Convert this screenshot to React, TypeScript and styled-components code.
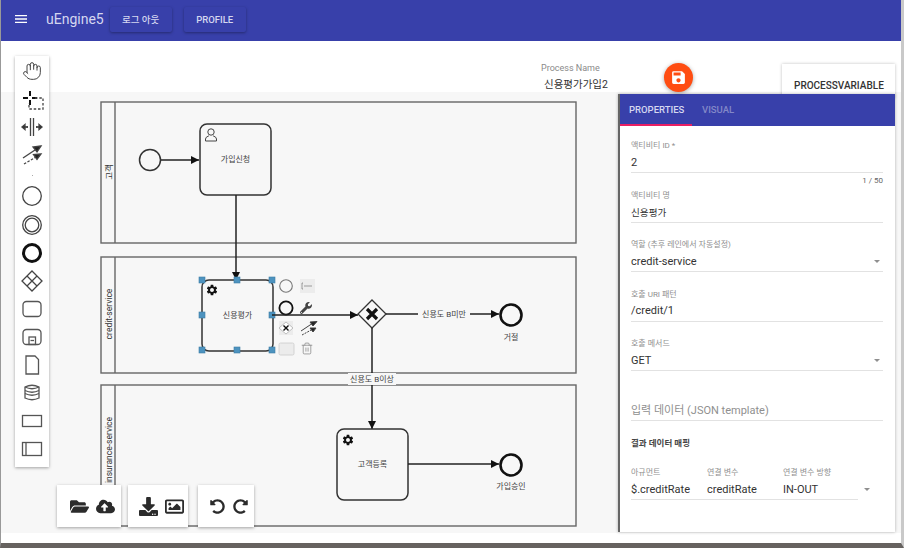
import * as React from 'react';
import styled, { createGlobalStyle } from 'styled-components';
import { Hand, Trash2 } from 'lucide-react';
import { FaCloudUploadAlt, FaDownload, FaFolderOpen, FaRedoAlt, FaRegImage, FaUndoAlt, FaWrench } from 'react-icons/fa';
import { MdMenu, MdSave, MdSettings } from 'react-icons/md';

const GlobalStyle = createGlobalStyle`
  html, body {
    margin: 0;
    background: #fff;
    font-family: Roboto, "Noto Sans CJK KR", sans-serif;
    overflow: hidden;
  }
`;

const BLUE = '#3840aa';

const Page = styled.div`
  position: relative;
  display: flex;
  flex-direction: column;
  width: 904px;
  height: 548px;
  box-sizing: border-box;
  padding-left: 1px;
  border-left: 1px solid #999;
  border-right: 3px solid #c9c9c9;
  border-bottom: 5px solid #66625f;
  background: #fff;
  overflow: hidden;
`;

const Header = styled.header`
  display: flex;
  align-items: center;
  flex: none;
  height: 41px;
  margin-left: -1px;
  padding-left: 12px;
  padding-bottom: 3px;
  box-sizing: border-box;
  background: ${BLUE};
  color: #fff;
`;

const Brand = styled.span`
  margin-left: 17px;
  margin-right: 6px;
  font-size: 14px;
  color: #d5d7f0;
`;

const HeaderButton = styled.div`
  display: flex;
  align-items: center;
  justify-content: center;
  width: 62px;
  height: 25px;
  margin-right: 12px;
  border-radius: 2px;
  background: ${BLUE};
  box-shadow: 0 1px 3px rgba(0, 0, 0, 0.35);
  font-size: 9.5px;
  font-weight: 500;
  color: #d5d7f0;
`;

const TitleBar = styled.div`
  flex: none;
  height: 51px;
  box-sizing: border-box;
  padding: 22px 0 0 539px;
`;

const ProcessField = styled.div`
  width: 77px;
`;

const ProcessLabel = styled.div`
  font-size: 9px;
  line-height: 11px;
  color: #8a8a8a;
`;

const ProcessValue = styled.div`
  margin: 3px 0 0 3px;
  font-size: 10.5px;
  line-height: 15px;
  color: #333;
  white-space: nowrap;
`;

const SaveFab = styled.div`
  position: absolute;
  left: 663px;
  top: 63px;
  z-index: 3;
  display: flex;
  align-items: center;
  justify-content: center;
  width: 29px;
  height: 29px;
  border-radius: 50%;
  background: #ff4d12;
  box-shadow: 0 1px 4px rgba(0, 0, 0, 0.35);
  color: #fff;
  font-size: 17px;
`;

const VariableCard = styled.div`
  position: absolute;
  left: 781px;
  top: 64px;
  z-index: 1;
  width: 113px;
  height: 34px;
  box-sizing: border-box;
  padding: 15px 0 0 12px;
  background: #fff;
  box-shadow: 0 0 3px rgba(0, 0, 0, 0.25);
  font-size: 10px;
  font-weight: 500;
  line-height: 14px;
  color: #333;
`;

const Canvas = styled.main`
  flex: none;
  height: 441px;
  margin-left: -1px;
  background: #f7f7f7;
`;

const Diagram = styled.svg`
  display: block;
  font-family: Roboto, "Noto Sans CJK KR", sans-serif;
`;

const Palette = styled.nav`
  position: absolute;
  left: 14px;
  top: 56px;
  z-index: 2;
  display: flex;
  flex-direction: column;
  width: 34px;
  height: 411px;
  padding-top: 1px;
  box-sizing: border-box;
  background: #fff;
  box-shadow: 0 1px 3px rgba(0, 0, 0, 0.35);
`;

const Tool = styled.div`
  display: flex;
  align-items: center;
  justify-content: center;
  flex: none;
  height: 28.1px;
  color: #444;
`;

const ToolSeparator = styled.div`
  flex: none;
  height: 13px;
  display: flex;
  align-items: center;
  justify-content: center;
  &::after {
    content: '';
    width: 1px;
    height: 1px;
    background: #aaa;
  }
`;

const ToolGlyph = styled.svg.attrs({ width: 24, height: 24, viewBox: '0 0 24 24' })`
  fill: none;
  stroke: currentColor;
  stroke-width: 1.3;
`;

const BottomBar = styled.div`
  position: absolute;
  left: 56px;
  top: 485px;
  z-index: 2;
  display: flex;
`;

const ActionGroup = styled.div<{ $width: number; $gap: number; $after: number }>`
  display: flex;
  align-items: center;
  justify-content: center;
  gap: ${(p) => p.$gap}px;
  box-sizing: border-box;
  width: ${(p) => p.$width}px;
  height: 42px;
  margin-right: ${(p) => p.$after}px;
  padding-left: 6px;
  background: #fff;
  box-shadow: 0 1px 3px rgba(0, 0, 0, 0.35);
  color: #2b2b2b;
  font-size: 19px;
`;

const Panel = styled.aside`
  position: absolute;
  left: 617px;
  top: 94px;
  z-index: 2;
  width: 277px;
  height: 438px;
  box-sizing: border-box;
  border-left: 2px solid #666;
  background: #fff;
  box-shadow: 0 0 3px rgba(0, 0, 0, 0.3);
`;

const Tabs = styled.div`
  display: flex;
  height: 32px;
  background: ${BLUE};
`;

const Tab = styled.div<{ $active?: boolean }>`
  display: flex;
  align-items: center;
  box-sizing: border-box;
  height: 32px;
  width: ${(p) => (p.$active ? 72 : 60)}px;
  padding-left: ${(p) => (p.$active ? 9 : 10)}px;
  border-bottom: 2px solid ${(p) => (p.$active ? '#e91e63' : 'transparent')};
  font-size: 9.5px;
  font-weight: 500;
  color: ${(p) => (p.$active ? '#d5d7f0' : '#8388c8')};
`;

const Form = styled.div`
  padding: 14px 12px 0 11px;
`;

const Field = styled.div`
  position: relative;
  margin-bottom: 16.5px;
  border-bottom: 1px solid #e2e2e2;
`;

const FieldLabel = styled.div`
  height: 12px;
  font-size: 8px;
  line-height: 12px;
  color: #8f8f8f;
  white-space: nowrap;
`;

const FieldValue = styled.div<{ $placeholder?: boolean; $hangul?: boolean }>`
  display: flex;
  align-items: center;
  justify-content: space-between;
  height: 20px;
  font-size: ${(p) => (p.$hangul ? 9.6 : 11)}px;
  color: ${(p) => (p.$placeholder ? '#8f8f8f' : '#333')};
  white-space: nowrap;
`;

const Placeholder = styled.span`
  margin-top: -2px;
`;

const Counter = styled.div`
  position: absolute;
  top: 100%;
  right: 0;
  margin-top: 4px;
  font-size: 8px;
  line-height: 10px;
  color: #666;
`;

const Caret = styled.span`
  width: 0;
  height: 0;
  margin-right: 3px;
  border-left: 3px solid transparent;
  border-right: 3px solid transparent;
  border-top: 3px solid #8f8f8f;
`;

const SectionTitle = styled.div`
  height: 13px;
  font-size: 8.5px;
  font-weight: 700;
  line-height: 13px;
  color: #444;
`;

const MappingRow = styled.div`
  display: flex;
  align-items: center;
  margin-top: 17px;
`;

const MappingGrid = styled.div`
  display: grid;
  grid-template-columns: 76px 76px 75px;
  width: 227px;
  border-bottom: 1px solid #e2e2e2;
`;

const MappingCaret = styled(Caret)`
  margin: 12px 0 0 6px;
`;

const lanes = [
  { y: 102, height: 141, name: '고객', cy: 172 },
  { y: 257, height: 116, name: 'credit-service', cy: 314 },
  { y: 385, height: 141, name: 'insurance-service', cy: 450 },
];

const handles = [
  [202, 280],
  [237, 280],
  [272, 280],
  [202, 315],
  [272, 315],
  [202, 350],
  [237, 350],
  [272, 350],
];

const Label = ({ x, y, children }: { x: number; y: number; children: React.ReactNode }) => (
  <text x={x} y={y} textAnchor="middle" dominantBaseline="central" fontSize="8" fill="#444">
    {children}
  </text>
);

const TaskBox = ({ x, y, label }: { x: number; y: number; label: string }) => (
  <>
    <rect x={x} y={y} width="71" height="71" rx="7" fill="#f7f7f7" stroke="#333" strokeWidth="1.5" />
    <Label x={x + 35.5} y={y + 35.5}>
      {label}
    </Label>
  </>
);

const Flow = ({ d }: { d: string }) => (
  <path d={d} fill="none" stroke="#222" strokeWidth="1.5" markerEnd="url(#arrow)" />
);

const EndEvent = ({ cx, cy }: { cx: number; cy: number }) => (
  <circle cx={cx} cy={cy} r="10.5" fill="#f7f7f7" stroke="#111" strokeWidth="2.6" />
);

const ProcessDiagram = () => (
  <Diagram width="620" height="441" viewBox="1 92 620 441">
    <defs>
      <marker id="arrow" markerWidth="8" markerHeight="8" refX="8" refY="4" orient="auto" markerUnits="userSpaceOnUse">
        <path d="M0 0 L8 4 L0 8 Z" fill="#111" />
      </marker>
    </defs>

    {lanes.map((lane) => (
      <g key={lane.name}>
        <rect x="101" y={lane.y} width="475" height={lane.height} fill="none" stroke="#666" strokeWidth="1.4" />
        <line x1="115" y1={lane.y} x2="115" y2={lane.y + lane.height} stroke="#666" strokeWidth="1.4" />
        <text
          x="108.5"
          y={lane.cy}
          textAnchor="middle"
          dominantBaseline="central"
          fontSize="8.5"
          fill="#333"
          transform={`rotate(-90 108.5 ${lane.cy})`}>
          {lane.name}
        </text>
      </g>
    ))}

    <circle cx="150" cy="160" r="10.5" fill="#f7f7f7" stroke="#333" strokeWidth="1.5" />
    <Flow d="M161 160 H199" />
    <TaskBox x={200} y={124} label="가입신청" />
    <g fill="none" stroke="#444" strokeWidth="1">
      <circle cx="211" cy="132" r="3.2" />
      <path d="M205.5 141 v-2 q0 -2 3.4 -3.2 M216.5 141 v-2 q0 -2 -3.4 -3.2 M205.5 141 h11" />
    </g>
    <Flow d="M236 195 V280" />

    <TaskBox x={202} y={280} label="신용평가" />
    <MdSettings x={205.5} y={283.5} size={13} color="#111" />
    {handles.map(([x, y]) => (
      <rect key={`${x}-${y}`} x={x - 3} y={y - 3} width="6" height="6" fill="#4d93bf" stroke="#3d7ea6" strokeWidth="0.6" />
    ))}

    <circle cx="286" cy="286" r="6.3" fill="none" stroke="#777" strokeWidth="1.1" />
    <rect x="300" y="279" width="15" height="14" fill="#ececec" />
    <path d="M303 283 h-1 v6 h1 M304 286 h8" fill="none" stroke="#666" strokeWidth="0.6" />
    <circle cx="286" cy="308" r="6.6" fill="#f7f7f7" stroke="#111" strokeWidth="1.8" />
    <FaWrench x={300} y={302} size={12} color="#444" />
    <rect x="279" y="321" width="14" height="14" fill="#ececec" />
    <path d="M286 322 l7 6 l-7 6 l-7 -6 Z" fill="#fff" stroke="#999" strokeWidth="0.6" />
    <path d="M283.5 325.5 l5 5 m0 -5 l-5 5" stroke="#111" strokeWidth="1.4" />
    <g stroke="#444" strokeWidth="1" fill="#222">
      <path d="M301 331 L313 323" />
      <path d="M317 321.5 L310 322 L313 326 Z" />
      <path d="M302 335 L313 329" strokeDasharray="2 1" />
      <path d="M316 328 L310 328 L313 332 Z" />
    </g>
    <rect x="279" y="343" width="15" height="12" rx="1.5" fill="#ececec" stroke="#ccc" strokeWidth="0.8" />
    <Trash2 x={300.5} y={342} size={13} color="#888" strokeWidth={1.4} />

    <Flow d="M272 315 H358" />
    <path d="M372 300 L386 314 L372 328 L358 314 Z" fill="#f7f7f7" stroke="#333" strokeWidth="1.3" />
    <path d="M367 309 L377 319 M377 309 L367 319" stroke="#111" strokeWidth="3.2" />

    <Flow d="M386 314 H499" />
    <rect x="418" y="308" width="52" height="12" fill="#f7f7f7" />
    <Label x={444} y={314}>
      신용도 B미만
    </Label>
    <EndEvent cx={511} cy={315} />
    <Label x={511} y={337}>
      거절
    </Label>

    <Flow d="M372 328 V429" />
    <rect x="348" y="373" width="48" height="12" fill="#f7f7f7" />
    <Label x={372} y={379}>
      신용도 B이상
    </Label>

    <TaskBox x={337} y={429} label="고객등록" />
    <MdSettings x={341.5} y={433.5} size={13} color="#111" />
    <Flow d="M408 464 H499" />
    <EndEvent cx={511} cy={465} />
    <Label x={511} y={486}>
      가입승인
    </Label>
  </Diagram>
);

const Tools = () => (
  <Palette>
    <Tool>
      <Hand size={20} strokeWidth={1.2} />
    </Tool>
    <Tool>
      <ToolGlyph>
        <path d="M10 4 v5 M10 13 v5 M3 11 h5 M12 11 h5" stroke="#111" strokeWidth="2" />
        <path d="M15 11 h8 v11 h-14 v-6" strokeDasharray="2.5 1.8" stroke="#444" />
      </ToolGlyph>
    </Tool>
    <Tool>
      <ToolGlyph>
        <path d="M10.5 3 v18 M13.5 3 v18" />
        <path d="M2 12 h6 M16 12 h6" stroke="#222" />
        <path d="M5 9.5 L2 12 L5 14.5 Z M19 9.5 L22 12 L19 14.5 Z M7 12 h1 M16 12 h1" fill="#222" />
      </ToolGlyph>
    </Tool>
    <Tool>
      <ToolGlyph>
        <path d="M3 15 L15 7" />
        <path d="M21 3 L13 4 L17 9 Z" fill="#222" />
        <path d="M4 21 L16 14" strokeDasharray="2.5 1.5" />
        <path d="M21 11 L13.5 11.5 L17 16.5 Z" fill="#222" />
      </ToolGlyph>
    </Tool>
    <ToolSeparator />
    <Tool>
      <ToolGlyph>
        <circle cx="12" cy="12" r="9.3" stroke="#444" />
      </ToolGlyph>
    </Tool>
    <Tool>
      <ToolGlyph>
        <circle cx="12" cy="12" r="9.3" stroke="#444" />
        <circle cx="12" cy="12" r="6.8" stroke="#444" />
      </ToolGlyph>
    </Tool>
    <Tool>
      <ToolGlyph>
        <circle cx="12" cy="12" r="8.5" stroke="#111" strokeWidth="3" />
      </ToolGlyph>
    </Tool>
    <Tool>
      <ToolGlyph>
        <path d="M12 2 L22 12 L12 22 L2 12 Z" stroke="#444" />
        <path d="M7 7 L17 17 M17 7 L7 17" stroke="#444" />
      </ToolGlyph>
    </Tool>
    <Tool>
      <ToolGlyph>
        <rect x="3" y="4.5" width="18" height="15" rx="3.5" stroke="#555" />
      </ToolGlyph>
    </Tool>
    <Tool>
      <ToolGlyph>
        <rect x="3" y="4.5" width="18" height="15" rx="3.5" stroke="#555" />
        <rect x="9" y="12" width="6.5" height="7.5" stroke="#555" />
        <path d="M10.5 15.5 h3.5" stroke="#555" />
      </ToolGlyph>
    </Tool>
    <Tool>
      <ToolGlyph>
        <path d="M6 3 h9 l3.5 3.5 V21 H6 Z" stroke="#555" />
      </ToolGlyph>
    </Tool>
    <Tool>
      <ToolGlyph>
        <path d="M5 6 q7 -3.5 14 0 v11 q-7 3.5 -14 0 Z" stroke="#555" />
        <path d="M5 6 q7 3.5 14 0 M5 9.5 q7 3.5 14 0 M5 12.5 q7 3.5 14 0" stroke="#555" />
      </ToolGlyph>
    </Tool>
    <Tool>
      <ToolGlyph>
        <rect x="2.5" y="6.5" width="19" height="11" stroke="#555" />
      </ToolGlyph>
    </Tool>
    <Tool>
      <ToolGlyph>
        <rect x="2.5" y="5.5" width="19" height="13" stroke="#555" />
        <path d="M6 5.5 v13" stroke="#555" />
      </ToolGlyph>
    </Tool>
  </Palette>
);

const fields = [
  { label: '액티비티 ID *', value: '2' },
  { label: '액티비티 명', value: '신용평가', hangul: true },
  { label: '역할 (추후 레인에서 자동설정)', value: 'credit-service', select: true },
  { label: '호출 URI 패턴', value: '/credit/1' },
  { label: '호출 메서드', value: 'GET', select: true },
];

const mapping = [
  { label: '아규먼트', value: '$.creditRate' },
  { label: '연결 변수', value: 'creditRate' },
  { label: '연결 변수 방향', value: 'IN-OUT' },
];

const App = () => (
  <Page>
    <GlobalStyle />
    <Header>
      <MdMenu size={16} />
      <Brand>uEngine5</Brand>
      <HeaderButton>로그 아웃</HeaderButton>
      <HeaderButton>PROFILE</HeaderButton>
    </Header>

    <TitleBar>
      <ProcessField>
        <ProcessLabel>Process Name</ProcessLabel>
        <ProcessValue>신용평가가입2</ProcessValue>
      </ProcessField>
    </TitleBar>
    <SaveFab>
      <MdSave />
    </SaveFab>
    <VariableCard>PROCESSVARIABLE</VariableCard>

    <Canvas>
      <ProcessDiagram />
    </Canvas>

    <Tools />

    <BottomBar>
      <ActionGroup $width={64} $gap={7} $after={7}>
        <FaFolderOpen />
        <FaCloudUploadAlt />
      </ActionGroup>
      <ActionGroup $width={60} $gap={7} $after={10}>
        <FaDownload />
        <FaRegImage />
      </ActionGroup>
      <ActionGroup $width={56} $gap={8} $after={0}>
        <FaUndoAlt size={15} />
        <FaRedoAlt size={15} />
      </ActionGroup>
    </BottomBar>

    <Panel>
      <Tabs>
        <Tab $active>PROPERTIES</Tab>
        <Tab>VISUAL</Tab>
      </Tabs>
      <Form>
        {fields.map((field, i) => (
          <Field key={field.label}>
            <FieldLabel>{field.label}</FieldLabel>
            <FieldValue $hangul={field.hangul}>
              {field.value}
              {field.select && <Caret />}
            </FieldValue>
            {i === 0 && <Counter>1 / 50</Counter>}
          </Field>
        ))}
        <Field>
          <FieldLabel />
          <FieldValue $placeholder>
            <Placeholder>입력 데이터 (JSON template)</Placeholder>
          </FieldValue>
        </Field>
        <SectionTitle>결과 데이터 매핑</SectionTitle>
        <MappingRow>
          <MappingGrid>
            {mapping.map((item) => (
              <div key={item.label}>
                <FieldLabel>{item.label}</FieldLabel>
                <FieldValue>{item.value}</FieldValue>
              </div>
            ))}
          </MappingGrid>
          <MappingCaret />
        </MappingRow>
      </Form>
    </Panel>
  </Page>
);

export default App;
